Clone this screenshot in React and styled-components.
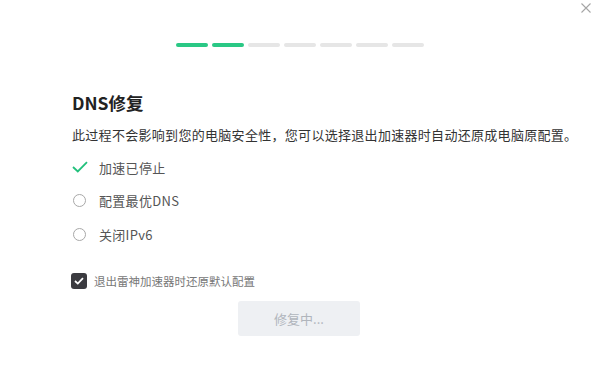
import React from "react";
import styled, { createGlobalStyle } from "styled-components";

const Global = createGlobalStyle`
  html, body { margin: 0; padding: 0; background: #fff; }
  body { font-family: "Noto Sans CJK SC", "Noto Sans", sans-serif; }
`;

const Page = styled.div`
  position: relative;
  width: 600px;
  height: 367px;
  background: #fff;
  overflow: hidden;
`;

const Close = styled.button`
  position: absolute;
  top: 3px;
  left: 581px;
  width: 10px;
  height: 10px;
  padding: 0;
  border: none;
  background: none;
  display: flex;
`;

const Steps = styled.div`
  display: flex;
  justify-content: center;
  gap: 4px;
  padding-top: 43px;
`;

const Step = styled.div`
  width: 32px;
  height: 4px;
  border-radius: 2px;
  background: ${(p) => (p.$done ? "#2ac885" : "#e6e6e6")};
`;

const Content = styled.div`
  padding: 0 0 0 72px;
`;

const Title = styled.h1`
  margin: 44px 0 0;
  font-size: 17.5px;
  line-height: 24px;
  font-weight: 700;
  color: #222;
`;

const Desc = styled.p`
  margin: 10px 0 0;
  font-size: 13px;
  line-height: 20px;
  letter-spacing: 0.3px;
  color: #333;
  white-space: nowrap;
`;

const List = styled.div`
  margin-top: 12px;
  display: flex;
  flex-direction: column;
  gap: 13.5px;
`;

const Item = styled.div`
  display: flex;
  align-items: center;
  height: 20px;
  font-size: 13px;
  letter-spacing: 0.3px;
  color: #555;
`;

const IconSlot = styled.span`
  width: 16px;
  height: 16px;
  margin-right: 11px;
  display: flex;
  align-items: center;
  justify-content: flex-start;
`;

const Radio = styled.span`
  width: 11px;
  height: 11px;
  margin-left: 1px;
  border: 1.5px solid #a8a8a8;
  border-radius: 50%;
`;

const CheckRow = styled.label`
  margin-top: 29px;
  display: flex;
  align-items: center;
  font-size: 11.5px;
  color: #777;
  height: 16px;
`;

const Box = styled.span`
  width: 16px;
  height: 16px;
  border-radius: 3px;
  background: #3b3b40;
  margin-left: -1px;
  margin-right: 7px;
  display: flex;
  align-items: center;
  justify-content: center;
`;

const Footer = styled.div`
  display: flex;
  justify-content: center;
  margin-top: 12px;
`;

const Button = styled.button`
  width: 122px;
  height: 35px;
  margin-left: -2px;
  border: none;
  border-radius: 3px;
  background: #eef0f3;
  color: #b0b5bc;
  font-family: inherit;
  font-size: 13px;
`;

const items = [
  { text: "加速已停止", done: true },
  { text: "配置最优DNS", done: false },
  { text: "关闭IPv6", done: false },
];

export default function App() {
  return (
    <Page>
      <Global />
      <Close aria-label="close">
        <svg width="10" height="10" viewBox="0 0 10 10">
          <path d="M0.5 0.5L9.5 9.5M9.5 0.5L0.5 9.5" stroke="#a5a5a5" strokeWidth="1.1" fill="none" />
        </svg>
      </Close>
      <Steps>
        {Array.from({ length: 7 }).map((_, i) => (
          <Step key={i} $done={i < 2} />
        ))}
      </Steps>
      <Content>
        <Title>DNS修复</Title>
        <Desc>此过程不会影响到您的电脑安全性，您可以选择退出加速器时自动还原成电脑原配置。</Desc>
        <List>
          {items.map((it) => (
            <Item key={it.text}>
              <IconSlot>
                {it.done ? (
                  <svg width="16" height="12" viewBox="0 0 16 12">
                    <path d="M1 6L5.8 10.5L15 1.2" stroke="#22c07c" strokeWidth="1.8" fill="none" />
                  </svg>
                ) : (
                  <Radio />
                )}
              </IconSlot>
              {it.text}
            </Item>
          ))}
        </List>
        <CheckRow>
          <Box>
            <svg width="10" height="8" viewBox="0 0 10 8">
              <path d="M1 4L3.8 6.6L9 1.2" stroke="#fff" strokeWidth="1.8" fill="none" />
            </svg>
          </Box>
          退出雷神加速器时还原默认配置
        </CheckRow>
      </Content>
      <Footer>
        <Button>修复中...</Button>
      </Footer>
    </Page>
  );
}
